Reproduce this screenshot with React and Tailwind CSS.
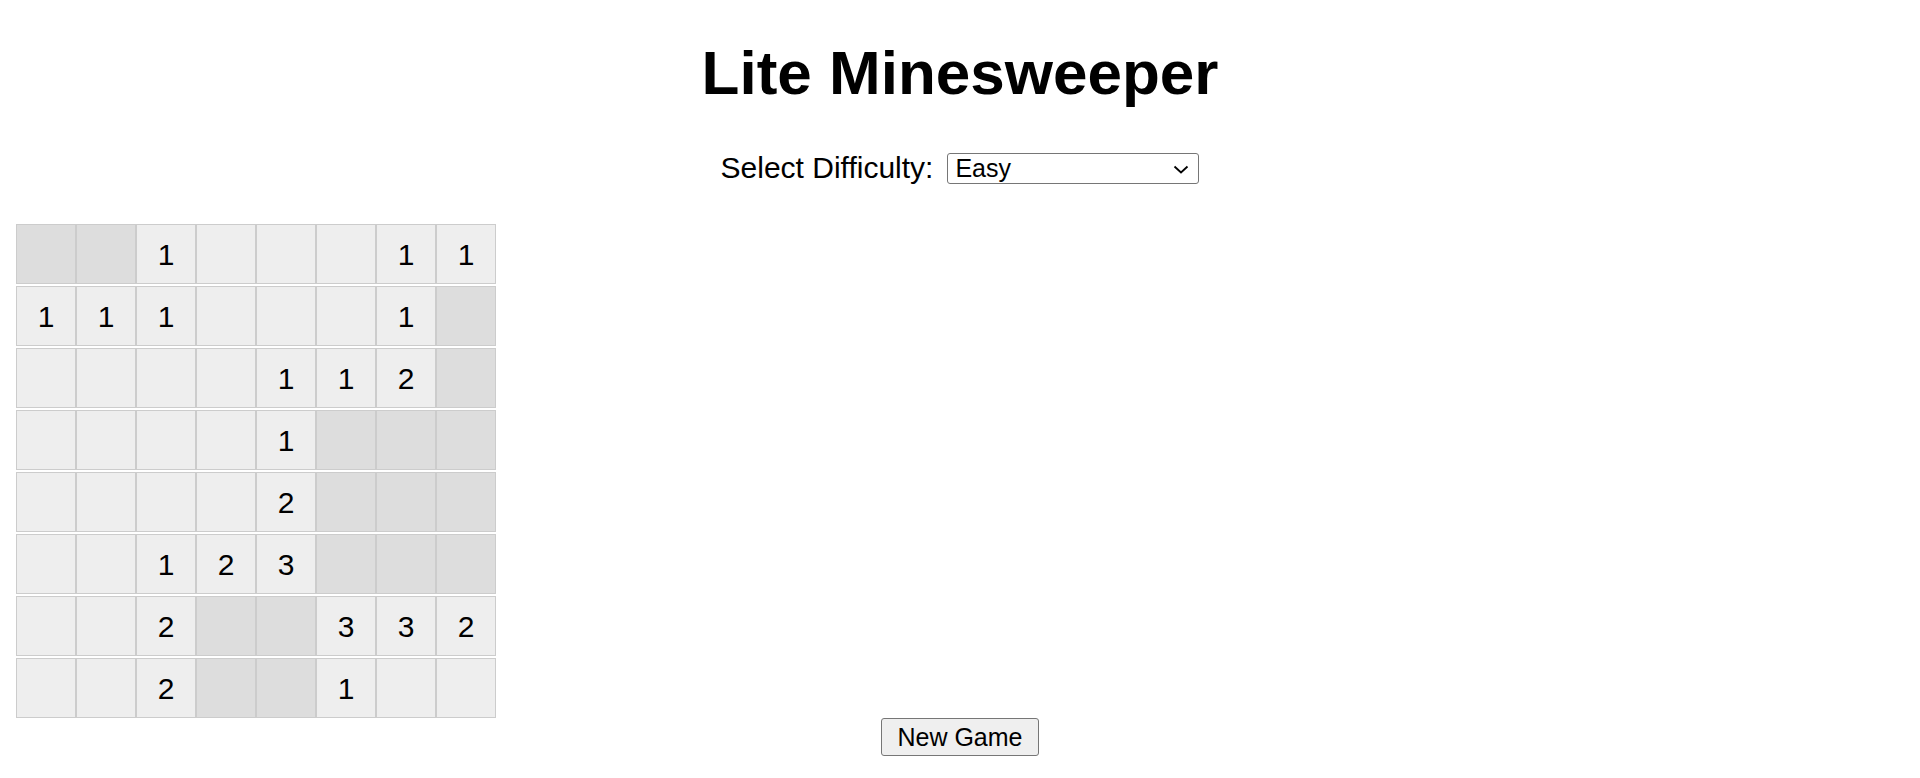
import React, { useState } from 'react';

// 'h' = hidden cell, '' = revealed blank, number = revealed count
const initialBoard = [
  ['h', 'h', 1, '', '', '', 1, 1],
  [1, 1, 1, '', '', '', 1, 'h'],
  ['', '', '', '', 1, 1, 2, 'h'],
  ['', '', '', '', 1, 'h', 'h', 'h'],
  ['', '', '', '', 2, 'h', 'h', 'h'],
  ['', '', 1, 2, 3, 'h', 'h', 'h'],
  ['', '', 2, 'h', 'h', 3, 3, 2],
  ['', '', 2, 'h', 'h', 1, '', ''],
];

const Cell = ({ value }) => {
  const hidden = value === 'h';
  return (
    <div
      className={`w-[60px] h-[60px] border border-[#cccccc] flex items-center justify-center text-[30px] text-black ${
        hidden ? 'bg-[#dddddd]' : 'bg-[#eeeeee]'
      }`}
    >
      {hidden ? '' : value}
    </div>
  );
};

const App = () => {
  const [difficulty, setDifficulty] = useState('easy');
  const [board] = useState(initialBoard);

  return (
    <div className="min-h-[778px] bg-white text-black font-['Liberation_Sans',Arial,sans-serif]">
      <h1 className="text-center font-bold text-[62px] leading-[71px] pt-[37px]">Lite Minesweeper</h1>

      {/* Difficulty picker */}
      <div className="flex justify-center items-center gap-[14px] mt-[43px]">
        <label htmlFor="difficulty" className="text-[30px] leading-[34px]">Select Difficulty:</label>
        <div className="relative">
          <select
            id="difficulty"
            value={difficulty}
            onChange={(e) => setDifficulty(e.target.value)}
            className="appearance-none w-[252px] h-[31px] border border-[#767676] rounded-[3px] bg-white pl-[7px] text-[25px] leading-[29px] font-['Liberation_Sans',Arial,sans-serif]"
          >
            <option value="easy">Easy</option>
            <option value="medium">Medium</option>
            <option value="hard">Hard</option>
          </select>
          <svg
            className="absolute right-[10px] top-[12px] pointer-events-none"
            width="16"
            height="9"
            viewBox="0 0 16 9"
            fill="none"
            stroke="#000"
            strokeWidth="1.8"
          >
            <path d="M1.5 1.5 L8 7.5 L14.5 1.5" />
          </svg>
        </div>
      </div>

      {/* Board */}
      <div className="flex flex-col gap-[2px] mt-[39px] ml-[16px] w-fit">
        {board.map((row, r) => (
          <div key={r} className="flex">
            {row.map((value, c) => (
              <Cell key={c} value={value} />
            ))}
          </div>
        ))}
      </div>

      <div className="flex justify-center">
        <button className="w-[158px] h-[38px] border border-[#767676] rounded-[3px] bg-[#efefef] text-[25px] leading-[29px] text-black">
          New Game
        </button>
      </div>
    </div>
  );
};

export default App;
